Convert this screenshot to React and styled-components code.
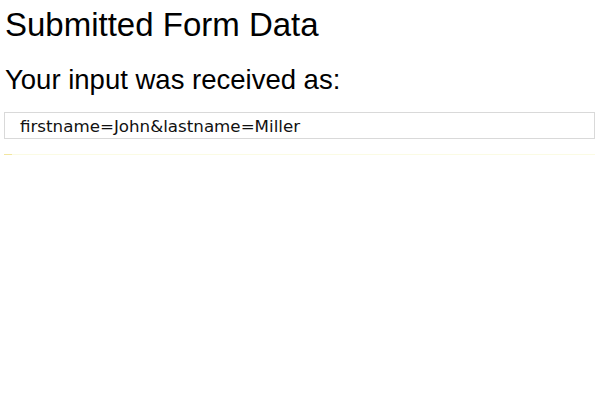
import React from "react";
import styled, { createGlobalStyle } from "styled-components";

const GlobalStyle = createGlobalStyle`
  html, body {
    margin: 0;
    padding: 0;
    background: #ffffff;
  }
  body {
    font-family: "Liberation Sans", Arial, sans-serif;
    color: #000000;
  }
`;

const Page = styled.div`
  padding: 6px 5px 0 4px;
  display: flex;
  flex-direction: column;
`;

const Title = styled.h1`
  margin: 0 0 0 1px;
  font-size: 33px;
  font-weight: normal;
  line-height: 38px;
`;

const Subtitle = styled.h2`
  margin: 20px 0 0 1px;
  font-size: 27.5px;
  font-weight: normal;
  line-height: 32px;
`;

const ResultBox = styled.div`
  margin-top: 16px;
  height: 25px;
  border: 1px solid #d9d9d9;
  padding: 0 0 0 15px;
  display: flex;
  align-items: center;
  font-family: "DejaVu Sans", Verdana, sans-serif;
  font-size: 16.7px;
  color: #111111;
`;

const Rule = styled.div`
  margin-top: 15px;
  height: 1px;
  background: linear-gradient(to right, #f2e6a0 0, #f2e6a0 8px, #fbfbe4 8px);
`;

export default function App() {
  return (
    <>
      <GlobalStyle />
      <Page>
        <Title>Submitted Form Data</Title>
        <Subtitle>Your input was received as:</Subtitle>
        <ResultBox>firstname=John&amp;lastname=Miller</ResultBox>
        <Rule />
      </Page>
    </>
  );
}
